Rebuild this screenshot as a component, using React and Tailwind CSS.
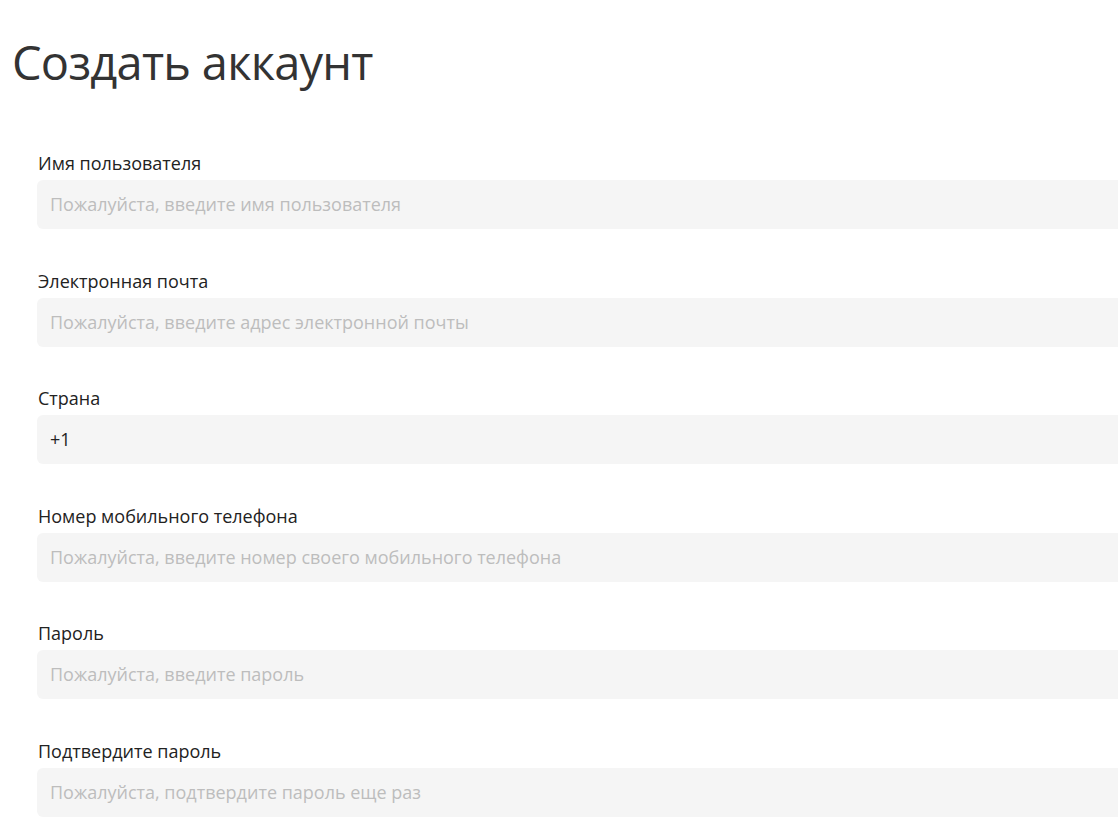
import React from "react";

const fields = [
  { label: "Имя пользователя", placeholder: "Пожалуйста, введите имя пользователя" },
  { label: "Электронная почта", placeholder: "Пожалуйста, введите адрес электронной почты" },
  { label: "Страна", value: "+1" },
  { label: "Номер мобильного телефона", placeholder: "Пожалуйста, введите номер своего мобильного телефона" },
  { label: "Пароль", placeholder: "Пожалуйста, введите пароль" },
  { label: "Подтвердите пароль", placeholder: "Пожалуйста, подтвердите пароль еще раз" },
];

export default function App() {
  return (
    <div
      className="w-[1118px] h-[835px] overflow-hidden bg-white"
      style={{ fontFamily: '"Open Sans", "Noto Sans", sans-serif' }}
    >
      <h1 className="pt-[32px] pl-[12px] text-[47px] leading-[60px] tracking-[-0.75px] text-[#333333] font-normal">
        Создать аккаунт
      </h1>
      <div className="pl-[37px] pt-[59px]">
        {fields.map((f) => (
          <div key={f.label} className="mb-[39.5px]">
            <div className="pl-[1px] text-[18px] leading-[24px] text-[#222222] mb-[5px]">
              {f.label}
            </div>
            <div className="w-[1100px] h-[49px] rounded-[6px] bg-[#f5f5f5] flex items-center px-[13px] text-[18px]">
              {f.value ? (
                <span className="text-[#222222]">{f.value}</span>
              ) : (
                <span className="text-[#bdbdbd]">{f.placeholder}</span>
              )}
            </div>
          </div>
        ))}
      </div>
    </div>
  );
}
